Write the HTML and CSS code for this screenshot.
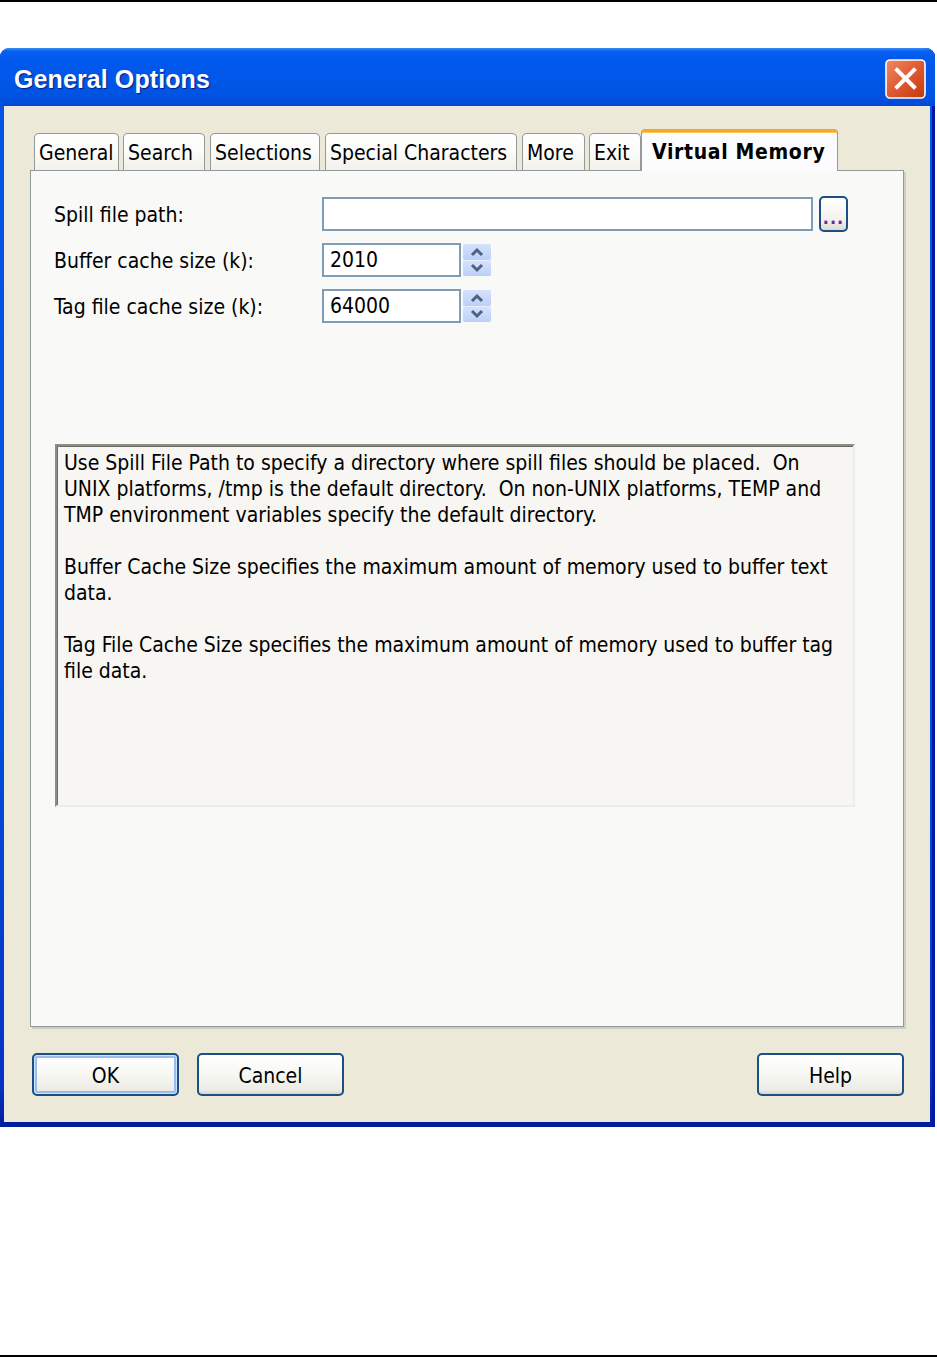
FILE: index.html
```html
<!DOCTYPE html>
<html>
<head>
<meta charset="utf-8">
<title>General Options</title>
<link rel="stylesheet" href="styles.css">
</head>
<body>
<div class="page">
  <div class="rule"></div>
  <div class="dialog">
    <div class="titlebar">
      <span class="title">General Options</span>
      <button class="close" aria-label="Close">
        <svg width="41" height="40" viewBox="0 0 41 40">
          <defs>
            <linearGradient id="cg" x1="0" y1="0" x2="1" y2="1">
              <stop offset="0" stop-color="#f0896a"/>
              <stop offset="0.5" stop-color="#de5a33"/>
              <stop offset="1" stop-color="#c2380d"/>
            </linearGradient>
          </defs>
          <rect x="1" y="1" width="39" height="38" rx="4" fill="url(#cg)" stroke="#ffffff" stroke-width="1.6"/>
          <path d="M12 11 L29 28 M29 11 L12 28" stroke="#ffffff" stroke-width="4" stroke-linecap="square"/>
        </svg>
      </button>
    </div>
    <div class="client">
      <div class="tabs">
        <div class="tab t-general">General</div>
        <div class="tab t-search">Search</div>
        <div class="tab t-sel">Selections</div>
        <div class="tab t-special">Special Characters</div>
        <div class="tab t-more">More</div>
        <div class="tab t-exit">Exit</div>
        <div class="tab active t-vm">Virtual Memory</div>
      </div>
      <div class="panel">
        <div class="form">
          <div class="row">
            <span class="label">Spill file path:</span>
            <span class="field path"></span>
            <button class="browse">...</button>
          </div>
          <div class="row">
            <span class="label">Buffer cache size (k):</span>
            <span class="field num">2010</span>
            <span class="spin">
              <span class="half"><svg width="16" height="10" viewBox="0 0 16 10"><path d="M3 8 L8 3 L13 8" fill="none" stroke="#4d6185" stroke-width="3"/></svg></span>
              <span class="half"><svg width="16" height="10" viewBox="0 0 16 10"><path d="M3 2 L8 7 L13 2" fill="none" stroke="#4d6185" stroke-width="3"/></svg></span>
            </span>
          </div>
          <div class="row">
            <span class="label">Tag file cache size (k):</span>
            <span class="field num">64000</span>
            <span class="spin">
              <span class="half"><svg width="16" height="10" viewBox="0 0 16 10"><path d="M3 8 L8 3 L13 8" fill="none" stroke="#4d6185" stroke-width="3"/></svg></span>
              <span class="half"><svg width="16" height="10" viewBox="0 0 16 10"><path d="M3 2 L8 7 L13 2" fill="none" stroke="#4d6185" stroke-width="3"/></svg></span>
            </span>
          </div>
        </div>
        <div class="help">
          <p>Use Spill File Path to specify a directory where spill files should be placed.&nbsp; On UNIX platforms, /tmp is the default directory.&nbsp; On non-UNIX platforms, TEMP and TMP environment variables specify the default directory.</p>
          <p>Buffer Cache Size specifies the maximum amount of memory used to buffer text data.</p>
          <p>Tag File Cache Size specifies the maximum amount of memory used to buffer tag file data.</p>
        </div>
      </div>
      <div class="buttons">
        <button class="btn default">OK</button>
        <button class="btn">Cancel</button>
        <span class="spacer"></span>
        <button class="btn">Help</button>
      </div>
    </div>
  </div>
  <div class="rule bottom"></div>
</div>
</body>
</html>
```

FILE: styles.css
```css
html, body {
  margin: 0;
  padding: 0;
  background: #ffffff;
}

.page {
  width: 937px;
  height: 1357px;
  display: flex;
  flex-direction: column;
  font-family: "DejaVu Sans Condensed", "DejaVu Sans", "Liberation Sans", sans-serif;
  font-stretch: condensed;
  font-size: 21px;
  color: #000000;
}

.rule {
  height: 2px;
  background: #000000;
  flex: none;
}

.rule.bottom {
  margin-top: auto;
}

.dialog {
  flex: none;
  margin-top: 46px;
  width: 935px;
  height: 1079px;
  border-radius: 9px 9px 0 0;
  background: linear-gradient(180deg, #0a5fe8 0%, #0055e5 6%, #0050de 60%, #0733c4 96%, #001d9a 100%);
  display: flex;
  flex-direction: column;
  box-shadow: inset -3px 0 0 #0019a8;
}

.titlebar {
  flex: none;
  height: 58px;
  display: flex;
  align-items: center;
  padding: 0 9px 0 14px;
  border-radius: 9px 9px 0 0;
  background: linear-gradient(180deg, #3c8ef3 0px, #0a62f2 3px, #0058ee 10px, #0057e8 30px, #0053e0 50px, #0048d6 58px);
}

.title {
  flex: 1;
  color: #ffffff;
  font-family: "Liberation Sans", "DejaVu Sans", sans-serif;
  font-stretch: normal;
  font-weight: bold;
  font-size: 25px;
  letter-spacing: 0.1px;
  text-shadow: 1px 1px 1px #0a1a8a;
  padding-top: 4px;
}

.close {
  width: 41px;
  height: 40px;
  padding: 0;
  border: 0;
  background: none;
  display: block;
  margin-top: 3px;
}

.close svg {
  display: block;
}

.client {
  flex: 1;
  margin: 0 5px 5px 4px;
  background: #ece9d8;
  padding: 23px 0 0 26px;
  display: flex;
  flex-direction: column;
}

.tabs {
  display: flex;
  align-items: flex-end;
  height: 41px;
  padding-left: 4px;
}

.tab {
  flex: none;
  box-sizing: border-box;
  height: 37px;
  border: 1px solid #919b9c;
  border-bottom: 0;
  border-radius: 5px 5px 0 0;
  background: linear-gradient(180deg, #ffffff 0%, #fbfbf9 50%, #f1f0ea 100%);
  padding: 6px 0 0 4px;
  white-space: nowrap;
  line-height: 26px;
  margin-right: 4px;
}

.t-general { width: 85px; }
.t-search { width: 82px; margin-right: 5px; }
.t-sel { width: 110px; margin-right: 5px; }
.t-special { width: 192px; margin-right: 5px; }
.t-more { width: 63px; }
.t-exit { width: 52px; margin-right: 0; }

.tab.active {
  width: 197px;
  height: 42px;
  margin-bottom: -1px;
  position: relative;
  z-index: 1;
  background: #fcfcfe;
  border-top: 3px solid #f5a830;
  border-radius: 4px 4px 0 0;
  font-weight: bold;
  letter-spacing: 0.65px;
  padding: 7px 0 0 10px;
  box-shadow: inset 0 1px 0 #ffc848;
}

.panel {
  box-sizing: border-box;
  width: 874px;
  height: 857px;
  border: 1px solid #919b9c;
  background: #f9f9f7;
  box-shadow: 2px 2px 0 #d0cec3;
  padding: 26px 0 0 23px;
}

.form {
  display: flex;
  flex-direction: column;
  gap: 12px;
}

.row {
  display: flex;
  align-items: center;
  height: 34px;
}

.label {
  width: 268px;
  flex: none;
  white-space: nowrap;
  padding-top: 2px;
}

.field {
  box-sizing: border-box;
  height: 34px;
  border: 2px solid #7f9db9;
  background: #ffffff;
  padding: 0 6px;
  line-height: 31px;
}

.field.path {
  width: 491px;
}

.field.num {
  width: 139px;
}

.browse {
  margin-left: 6px;
  width: 29px;
  height: 36px;
  box-sizing: border-box;
  border: 2px solid #1c4f86;
  border-radius: 5px;
  background: linear-gradient(180deg, #ffffff 0%, #f2f1ec 70%, #dcdad0 100%);
  padding: 0;
  font: inherit;
  font-weight: bold;
  font-size: 18px;
  color: #6a2a9a;
  line-height: 1;
  padding-top: 8px;
  letter-spacing: 1px;
}

.spin {
  margin-left: 2px;
  width: 28px;
  height: 32px;
  display: flex;
  flex-direction: column;
  gap: 1px;
  background: #e8eefb;
}

.half {
  flex: 1;
  display: flex;
  align-items: center;
  justify-content: center;
  background: linear-gradient(180deg, #d6e2fc 0%, #bcd0f8 100%);
  border-radius: 2px;
}

.half svg {
  display: block;
}

.help {
  box-sizing: border-box;
  margin-top: 121px;
  margin-left: 1px;
  width: 800px;
  height: 363px;
  border-style: solid;
  border-width: 2px;
  border-color: #8f8d82 #efeee6 #efeee6 #8f8d82;
  box-shadow: inset 1px 1px 0 #6f6d63;
  background: #f7f6f2;
  padding: 4px 8px 0 7px;
  line-height: 26px;
}

.help p {
  margin: 0 0 26px 0;
}

.buttons {
  display: flex;
  margin-top: 26px;
  padding-left: 2px;
  width: 872px;
  gap: 18px;
}

.spacer {
  flex: 1;
}

.btn {
  width: 147px;
  height: 43px;
  box-sizing: border-box;
  border: 2px solid #1b4f86;
  border-radius: 5px;
  background: linear-gradient(180deg, #ffffff 0%, #f7f7f3 50%, #ecebe4 90%, #d8d5c9 100%);
  font: inherit;
  color: #000000;
  padding: 2px 0 0 0;
}

.btn.default {
  box-shadow: inset 0 0 0 1px #cee3fd, inset 0 0 0 3px #9bbcee;
}
```
